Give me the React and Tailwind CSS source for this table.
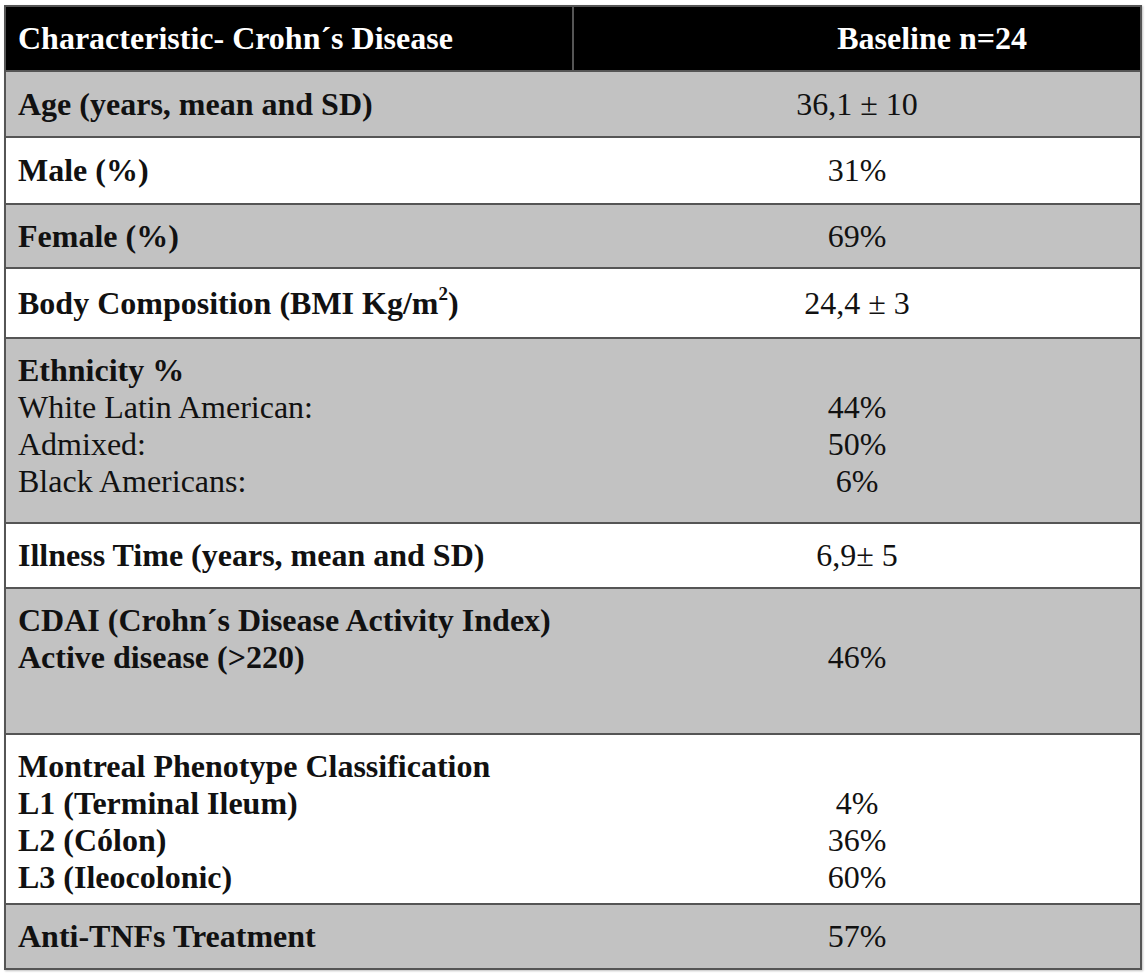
import React from 'react';

const rows = [
    { label: 'Age (years, mean and SD)', value: '36,1 ± 10', h: 'h-[66px]', grey: true },
    { label: 'Male (%)', value: '31%', h: 'h-[67px]' },
    { label: 'Female (%)', value: '69%', h: 'h-[64px]', grey: true },
    { label: <>Body Composition (BMI Kg/m<sup className="text-[19px]">2</sup>)</>, value: '24,4 ± 3', h: 'h-[70px]' },
    {
        label: 'Ethnicity %',
        sub: ['White Latin American:', 'Admixed:', 'Black Americans:'],
        subBold: false,
        values: ['44%', '50%', '6%'],
        h: 'h-[185px]',
        grey: true,
    },
    { label: 'Illness Time (years, mean and SD)', value: '6,9± 5', h: 'h-[65px]' },
    {
        label: 'CDAI (Crohn´s Disease Activity Index)',
        sub: ['Active disease (>220)'],
        subBold: true,
        values: ['46%'],
        h: 'h-[146px]',
        grey: true,
    },
    {
        label: 'Montreal Phenotype Classification',
        sub: ['L1 (Terminal Ileum)', 'L2 (Cólon)', 'L3 (Ileocolonic)'],
        subBold: true,
        values: ['4%', '36%', '60%'],
        h: 'h-[170px]',
    },
    { label: 'Anti-TNFs Treatment', value: '57%', h: 'h-[65px]', grey: true },
];

export default function App() {
    return (
        <div className="w-[1148px] h-[979px] bg-white pt-[5px] pl-[4px] font-['Liberation_Serif','Times_New_Roman',serif] text-[32px] leading-[37px] text-[#111]">
            <div className="w-[1138px] border-x-2 border-t-2 border-[#555] shadow-[1px_1px_2px_rgba(0,0,0,0.25)]">
                {/* header */}
                <div className="flex h-[65px] bg-black text-white font-bold border-b-2 border-[#555]">
                    <div className="w-[568px] flex items-center pl-[12px] border-r-2 border-[#555]">
                        Characteristic- Crohn´s Disease
                    </div>
                    <div className="flex-1 flex items-center justify-end pr-[113px]">Baseline n=24</div>
                </div>

                {rows.map((row, i) => (
                    <div
                        key={i}
                        className={`flex border-b-2 border-[#555] ${row.h} ${row.grey ? 'bg-[#c2c2c2]' : 'bg-white'}`}
                    >
                        {row.sub ? (
                            <>
                                <div className="w-[568px] pl-[12px] pt-[13px]">
                                    <div className="font-bold">{row.label}</div>
                                    {row.sub.map((s) => (
                                        <div key={s} className={row.subBold ? 'font-bold' : ''}>{s}</div>
                                    ))}
                                </div>
                                <div className="flex-1 text-center pt-[13px]">
                                    <div>&nbsp;</div>
                                    {row.values.map((v) => (
                                        <div key={v}>{v}</div>
                                    ))}
                                </div>
                            </>
                        ) : (
                            <>
                                <div className="w-[568px] pl-[12px] flex items-center font-bold">{row.label}</div>
                                <div className="flex-1 flex items-center justify-center">{row.value}</div>
                            </>
                        )}
                    </div>
                ))}
            </div>
        </div>
    );
}
